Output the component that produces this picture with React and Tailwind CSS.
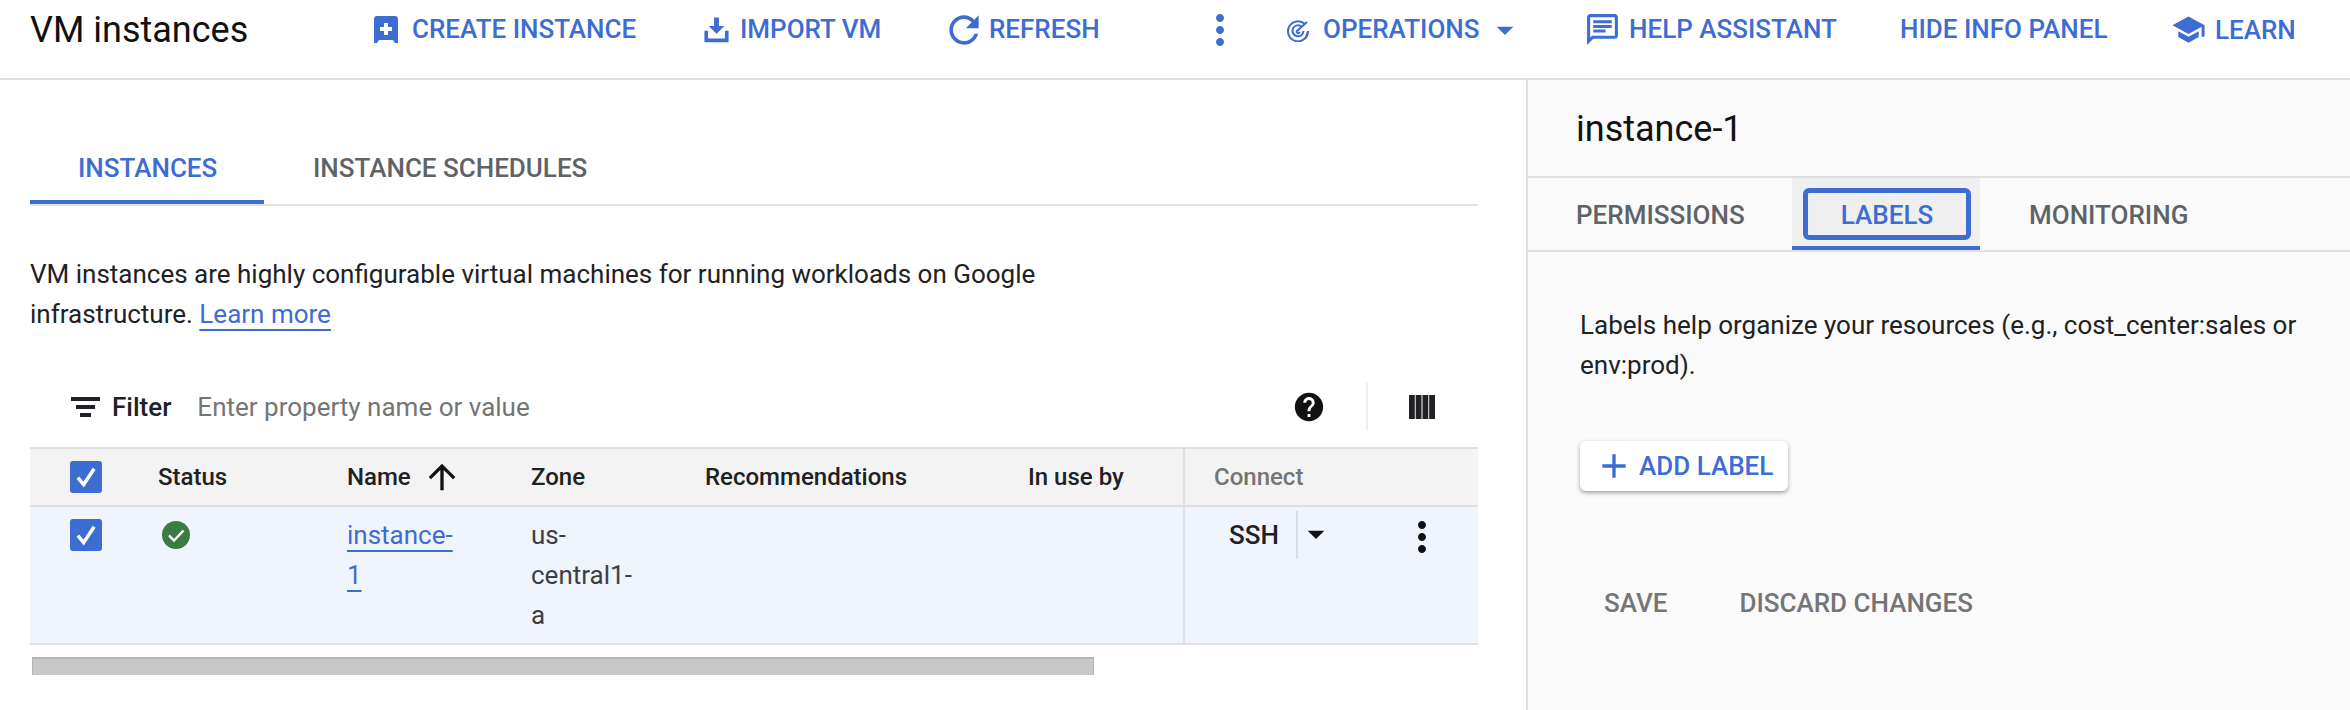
const blue = "text-[#3d6cd3]";

const Icon = ({ d, className }) => (
  <svg viewBox="0 0 24 24" fill="currentColor" className={`shrink-0 ${className}`}>
    <path d={d} />
  </svg>
);

const paths = {
  importVm: "M10 2h4v7h4.500L12 15.500 5.500 9H10V2zM2 13h3v6.500h14V13h3v9.500H2V13z",
  refresh: "M17.65 6.35C16.2 4.9 14.21 4 12 4c-4.42 0-7.99 3.58-7.99 8s3.57 8 7.99 8c3.73 0 6.84-2.55 7.73-6h-2.08c-.82 2.33-3.04 4-5.65 4-3.31 0-6-2.69-6-6s2.69-6 6-6c1.66 0 3.14.69 4.22 1.78L13 11h7V4l-2.35 2.35z",
  dots: "M12 8c1.1 0 2-.9 2-2s-.9-2-2-2-2 .9-2 2 .9 2 2 2zm0 2c-1.1 0-2 .9-2 2s.9 2 2 2 2-.9 2-2-.9-2-2-2zm0 6c-1.1 0-2 .9-2 2s.9 2 2 2 2-.9 2-2-.9-2-2-2z",
  chat: "M20 2H4c-1.1 0-2 .9-2 2v18l4-4h14c1.1 0 2-.9 2-2V4c0-1.1-.9-2-2-2zm0 14H5.17L4 17.17V4h16v12zM6 12h8v2H6zm0-3h12v2H6zm0-3h12v2H6z",
  school: "M5 13.18v4L12 21l7-3.82v-4L12 17l-7-3.82zM12 3L1 9l11 6 9-4.91V17h2V9L12 3z",
  help: "M12 2C6.48 2 2 6.48 2 12s4.48 10 10 10 10-4.48 10-10S17.52 2 12 2zm1 17h-2v-2h2v2zm2.07-7.75l-.9.92C13.45 12.9 13 13.5 13 15h-2v-.5c0-1.1.45-2.1 1.17-2.83l1.24-1.26c.37-.36.59-.86.59-1.41 0-1.1-.9-2-2-2s-2 .9-2 2H8c0-2.21 1.79-4 4-4s4 1.79 4 4c0 .88-.36 1.68-.93 2.25z",
  arrowUp: "M4 12l1.41 1.41L11 7.83V20h2V7.83l5.58 5.59L20 12l-8-8-8 8z",
  caret: "M7 10l5 5 5-5z",
  plus: "M19 13h-6v6h-2v-6H5v-2h6V5h2v6h6v2z",
};

const CreateIcon = () => (
  <svg viewBox="0 0 24 28" className="w-6 h-7 shrink-0" fill="currentColor">
    <path d="M3 0h18a3 3 0 0 1 3 3v24h-3l-2-3H5l-2 3H0V3a3 3 0 0 1 3-3z" />
    <path d="M10 7h4v4h4v4h-4v4h-4v-4H6v-4h4z" fill="#fff" />
  </svg>
);

const OperationsIcon = () => (
  <svg viewBox="0 0 24 24" className="w-6 h-6 shrink-0" fill="none" stroke="currentColor" strokeWidth="2">
    <path d="M19 6.200A10 10 0 1 0 22 13" />
    <path d="M15.500 8.500A5.500 5.500 0 1 0 17.500 13" />
    <path d="M13 12.500a1.500 1.500 0 1 0 .6 1.200" />
    <path d="M12 12l9-8" />
    <path d="M22 13l-3 8" strokeWidth="1.500" />
  </svg>
);

const FilterIcon = () => (
  <svg viewBox="0 0 29 20" className="w-[29px] h-5 shrink-0 ml-[41px]" fill="#202124">
    <path d="M0 0h29v4H0zM5 8h19v4H5zM9 16h11v4H9z" />
  </svg>
);

const ColumnsIcon = () => (
  <svg viewBox="0 0 26 24" className="w-[26px] h-6 shrink-0 ml-[41px] mr-[43px]" fill="#202124">
    <path d="M0 0h5.800v24H0zM6.700 0h5.800v24H6.700zM13.500 0h5.800v24h-5.800zM20.200 0H26v24h-5.800z" />
  </svg>
);

const Checkbox = () => (
  <div className="w-8 h-8 rounded-[3px] bg-[#3d6cd3] flex items-center justify-center">
    <svg viewBox="0 0 24 24" className="w-7 h-7" fill="none" stroke="#fff" strokeWidth="3">
      <path d="M5 12.500l5 6L19 5" />
    </svg>
  </div>
);

const StatusOk = () => (
  <svg viewBox="0 0 28 28" className="w-7 h-7 block">
    <circle cx="14" cy="14" r="14" fill="#3a7d44" />
    <path d="M7 14.500l5 5L21.500 9.500" fill="none" stroke="#fff" strokeWidth="2.400" />
  </svg>
);

const Header = () => (
  <div className={`h-[80px] shrink-0 border-b-2 border-[#e0e0e0] flex items-center text-[26px] font-medium whitespace-nowrap pb-[19px] ${blue}`}>
    <div className="w-[374px] pl-[30px] text-[36px] font-normal text-[#111]">VM instances</div>
    <div className="w-[330px] flex items-center gap-[14px]"><CreateIcon /><span>CREATE INSTANCE</span></div>
    <div className="w-[245px] flex items-center gap-[9px]"><Icon d={paths.importVm} className="w-[29px] h-[29px] -ml-[2px]" /><span>IMPORT VM</span></div>
    <div className="w-[253px] flex items-center gap-[3px]"><Icon d={paths.refresh} className="w-[44px] h-[44px] -ml-[7px]" /><span>REFRESH</span></div>
    <div className="w-[84px] flex"><Icon d={paths.dots} className="w-12 h-12 -ml-[6px]" /></div>
    <div className="w-[301px] flex items-center gap-[13px]"><OperationsIcon /><span>OPERATIONS</span><Icon d={paths.caret} className="w-10 h-10 -ml-[8px]" /></div>
    <div className="w-[313px] flex items-center gap-[8px]"><Icon d={paths.chat} className="w-[37px] h-[37px] -ml-[3px]" /><span>HELP ASSISTANT</span></div>
    <div className="w-[273px]">HIDE INFO PANEL</div>
    <div className="flex items-center gap-[9px] mt-[2px]"><Icon d={paths.school} className="w-[35px] h-[35px] -ml-[2px] -mt-[2px]" /><span>LEARN</span></div>
  </div>
);

const LeftPanel = () => (
  <div className="w-[1528px] shrink-0 border-r-2 border-[#e0e0e0] pl-[30px] pr-[48px] pt-[60px]">
    <div className="flex h-[66px] border-b-2 border-[#e0e0e0] text-[26px] font-medium">
      <div className={`w-[234px] h-[64px] border-b-4 border-[#3d6cd3] pl-[48px] pt-[9px] ${blue}`}>INSTANCES</div>
      <div className="pl-[49px] pt-[9px] text-[#5f6368]">INSTANCE SCHEDULES</div>
    </div>
    <p className="mt-[48px] w-[1060px] text-[26px] leading-[40px] text-[#202124]">
      VM instances are highly configurable virtual machines for running workloads on Google
      infrastructure.{" "}
      <a className={`${blue} underline underline-offset-[6px] decoration-2`}>Learn more</a>
    </p>
    <div className="mt-[41px] h-[64px] flex items-center text-[26px]">
      <FilterIcon />
      <span className="ml-[12px] font-medium text-[#202124]">Filter</span>
      <span className="ml-[26px] text-[#757575]">Enter property name or value</span>
      <Icon d={paths.help} className="w-[34px] h-[34px] ml-auto text-[#111]" />
      <div className="w-[2px] h-[48px] bg-[#eeeeee] ml-[40px]" />
      <ColumnsIcon />
    </div>
    <div className="mt-[8px] border-t-2 border-b-2 border-[#e0e0e0] text-[24px]">
      <div className="grid grid-cols-[128px_189px_184px_174px_323px_155px_295px] h-[56px] items-center bg-[#f3f3f3] font-medium text-[#202124]">
        <div className="pl-[40px]"><Checkbox /></div>
        <div>Status</div>
        <div className="flex items-center gap-[11px]">Name<Icon d={paths.arrowUp} className="w-10 h-10 text-[#111]" /></div>
        <div>Zone</div>
        <div>Recommendations</div>
        <div>In use by</div>
        <div className="h-full border-l-2 border-[#e0e0e0] pl-[29px] flex items-center text-[#757575]">Connect</div>
      </div>
      <div className="grid grid-cols-[128px_189px_184px_174px_323px_155px_295px] h-[138px] bg-[#f0f4fc] border-t-2 border-[#e0e0e0] text-[26px] leading-[40px] text-[#3c4043]">
        <div className="pl-[40px] pt-[12px]"><Checkbox /></div>
        <div className="pl-[4px] pt-[14px]"><StatusOk /></div>
        <div className="pt-[8px]">
          <a className={`${blue} underline underline-offset-[6px] decoration-2`}>instance-<br />1</a>
        </div>
        <div className="pt-[8px]">us-<br />central1-<br />a</div>
        <div />
        <div />
        <div className="border-l-2 border-[#e0e0e0] flex items-start">
          <span className="ml-[44px] mt-[8px] w-[50px] font-medium text-[#202124]">SSH</span>
          <div className="w-[2px] h-[48px] bg-[#d8dde6] ml-[17px] mt-[4px]" />
          <Icon d={paths.caret} className="w-10 h-10 -ml-[2px] mt-[7px] text-[#111]" />
          <Icon d={paths.dots} className="w-12 h-12 ml-[62px] mt-[6px] text-[#111]" />
        </div>
      </div>
    </div>
    <div className="mt-[12px] ml-[2px] w-[1062px] h-[18px] bg-[#c8c8c8] border-t-2 border-l border-r border-[#b4b4b4]" />
  </div>
);

const RightPanel = () => (
  <div className="flex-1 bg-[#fafafa]">
    <div className="h-[98px] border-b-2 border-[#e0e0e0] pl-[48px] pt-[29px] text-[36px] leading-[40px] text-[#111]">instance-1</div>
    <div className="h-[74px] border-b-2 border-[#e0e0e0] flex items-center text-[26px] font-medium text-[#5f6368]">
      <div className="w-[264px] pl-[48px] pt-[2px]">PERMISSIONS</div>
      <div className={`w-[188px] h-[72px] bg-[#efefef] border-b-4 border-[#3d6cd3] pt-[10px] pl-[11px] ${blue}`}>
        <div className="w-[168px] h-[52px] border-[5px] border-[#3d6cd3] rounded-[6px] flex items-center justify-center pt-[2px]">LABELS</div>
      </div>
      <div className="pl-[49px] pt-[2px]">MONITORING</div>
    </div>
    <div className="pl-[52px] pr-[50px]">
      <p className="mt-[53px] text-[26px] leading-[40px] text-[#202124]">
        Labels help organize your resources (e.g., cost_center:sales or env:prod).
      </p>
      <button className={`mt-[56px] w-[208px] h-[50px] bg-white rounded-[6px] shadow-[0_2px_4px_rgba(0,0,0,0.35)] flex items-center text-[26px] font-medium ${blue}`}>
        <Icon d={paths.plus} className="w-10 h-10 ml-[14px]" />
        <span className="ml-[5px]">ADD LABEL</span>
      </button>
      <div className="mt-[93px] flex text-[26px] font-medium text-[#757575]">
        <span className="ml-[24px]">SAVE</span>
        <span className="ml-[72px]">DISCARD CHANGES</span>
      </div>
    </div>
  </div>
);

export default function App() {
  return (
    <div className="w-[2350px] h-[710px] overflow-hidden bg-white flex flex-col font-['Roboto',sans-serif]">
      <Header />
      <div className="flex flex-1 min-h-0">
        <LeftPanel />
        <RightPanel />
      </div>
    </div>
  );
}
